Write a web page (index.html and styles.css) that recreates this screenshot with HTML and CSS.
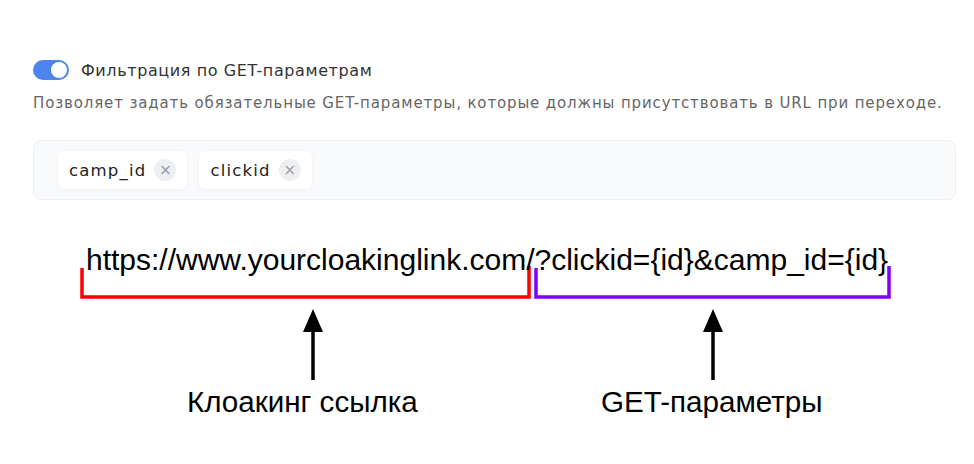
FILE: index.html
```html
<!DOCTYPE html>
<html lang="ru">
<head>
<meta charset="utf-8">
<link rel="stylesheet" href="styles.css">
</head>
<body>
<div class="page">
  <div class="setting">
    <div class="toggle-row">
      <span class="toggle"><span class="knob"></span></span>
      <span class="label">Фильтрация по GET-параметрам</span>
    </div>
    <p class="desc">Позволяет задать обязательные GET-параметры, которые должны присутствовать в URL при переходе.</p>
    <div class="tags">
      <span class="chip"><span class="chip-text">camp_id</span><span class="x">×</span></span>
      <span class="chip"><span class="chip-text">clickid</span><span class="x">×</span></span>
    </div>
  </div>
  <div class="diagram">
    <svg class="lines" width="974" height="240" viewBox="0 0 974 240">
      <polyline points="82,68 82,97 529,97 529,66" fill="none" stroke="#ff0000" stroke-width="3.5"/>
      <polyline points="536,68 536,97 889,97 889,66" fill="none" stroke="#7f00ff" stroke-width="3.5"/>
      <line x1="313" y1="180" x2="313" y2="128" stroke="#000" stroke-width="3.5"/>
      <polygon points="313,109 303,132 323,132" fill="#000"/>
      <line x1="713" y1="180" x2="713" y2="128" stroke="#000" stroke-width="3.5"/>
      <polygon points="713,109 703,132 723,132" fill="#000"/>
    </svg>
    <div class="url">https://www.yourcloakinglink.com/?clickid={id}&amp;camp_id={id}</div>
    <span class="cap cap1">Клоакинг ссылка</span>
    <span class="cap cap2">GET-параметры</span>
  </div>
</div>
</body>
</html>
```
FILE: styles.css
```css
* { box-sizing: border-box; }
html, body { margin: 0; padding: 0; background: #fff; }
body { width: 974px; height: 464px; overflow: hidden; }
.page { padding-top: 60px; }
.setting { padding: 0 18px 0 33px; font-family: "DejaVu Sans", "Open Sans", sans-serif; }
.toggle-row { display: flex; align-items: center; gap: 12px; height: 20px; }
.toggle { width: 36px; height: 20px; border-radius: 10px; background: #4c85ed; position: relative; display: inline-block; }
.knob { position: absolute; right: 2px; top: 2px; width: 16px; height: 16px; border-radius: 50%; background: #fff; }
.label { font-size: 16px; color: #333; letter-spacing: 0.6px; }
.desc { margin: 13px 0 0; font-size: 15px; color: #666; line-height: 20px; letter-spacing: 0.86px; white-space: nowrap; }
.tags { margin-top: 27px; height: 60px; background: #f9fafc; border: 1px solid #eef0f4; border-radius: 8px; display: flex; align-items: center; gap: 12px; padding: 0 0 0 24px; }
.chip { display: inline-flex; align-items: center; gap: 8px; height: 38px; padding: 0 11px; background: #fff; border-radius: 6px; font-size: 16.5px; color: #222; box-shadow: 0 1px 4px rgba(60,70,110,0.05); }
.chip-text { letter-spacing: 1.2px; }
.x { width: 22px; height: 22px; border-radius: 50%; background: #eeeff3; color: #9a9caa; font-size: 15px; display: inline-flex; align-items: center; justify-content: center; line-height: 1; }
.diagram { position: relative; height: 224px; font-family: "Liberation Sans", Arial, sans-serif; color: #000; }
.lines { position: absolute; left: 0; top: 0; }
.url { position: relative; padding: 45px 0 0 86px; font-size: 30px; line-height: 30px; }
.cap { position: absolute; top: 187px; font-size: 29.6px; line-height: 30px; }
.cap1 { left: 187px; }
.cap2 { left: 601px; }
```
